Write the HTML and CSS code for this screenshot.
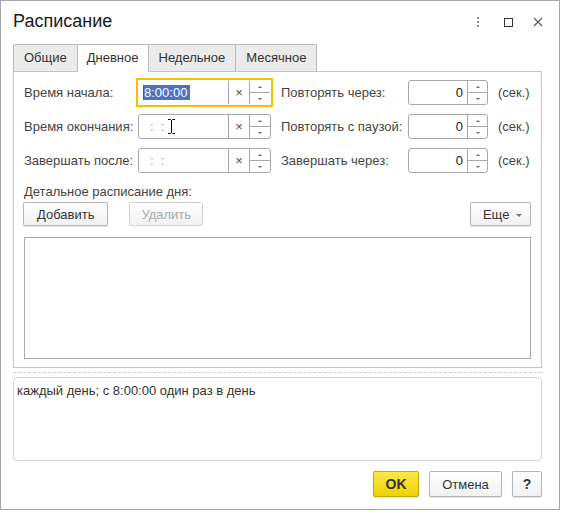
FILE: index.html
```html
<!DOCTYPE html>
<html lang="ru">
<head>
    <meta charset="UTF-8">
    <meta name="viewport" content="width=device-width, initial-scale=1.0">
    <title>Расписание</title>
    <link rel="stylesheet" href="styles.css">
</head>
<body>
    <div class="window">
        <header class="titlebar">
            <h1>Расписание</h1>
            <div class="win-buttons">
                <span class="win-btn">
                    <svg width="2" height="10" viewBox="0 0 2 10"><rect x="0" y="0" width="2" height="2" fill="#8a8a8a"/><rect x="0" y="4" width="2" height="2" fill="#8a8a8a"/><rect x="0" y="8" width="2" height="2" fill="#8a8a8a"/></svg>
                </span>
                <span class="win-btn">
                    <svg width="9" height="9" viewBox="0 0 9 9"><rect x="0.5" y="0.5" width="8" height="8" fill="none" stroke="#333"/></svg>
                </span>
                <span class="win-btn">
                    <svg width="10" height="10" viewBox="0 0 10 10"><path d="M1 1 L9 9 M9 1 L1 9" stroke="#555" stroke-width="1.1" fill="none"/></svg>
                </span>
            </div>
        </header>

        <nav class="tabs">
            <a class="tab">Общие</a>
            <a class="tab active">Дневное</a>
            <a class="tab">Недельное</a>
            <a class="tab">Месячное</a>
        </nav>

        <div class="panel">
            <div class="form-grid">
                <label>Время начала:</label>
                <div class="field focus">
                    <div class="field-text"><span class="sel">8:00:00</span></div>
                    <div class="field-clear">&times;</div>
                    <div class="spin"><span class="up"></span><span class="down"></span></div>
                </div>
                <label class="right">Повторять через:</label>
                <div class="num">
                    <div class="num-text">0</div>
                    <div class="spin"><span class="up"></span><span class="down"></span></div>
                </div>
                <span class="unit">(сек.)</span>

                <label>Время окончания:</label>
                <div class="field">
                    <div class="field-text"><span class="mask">:&nbsp;&nbsp;:</span></div>
                    <div class="field-clear">&times;</div>
                    <div class="spin"><span class="up"></span><span class="down"></span></div>
                    <svg class="ibeam" width="9" height="17" viewBox="0 0 9 17"><path d="M1 1.5 H3.5 L4.5 2.5 L5.5 1.5 H8 M4.5 2.5 V14.5 M1 15.5 H3.5 L4.5 14.5 L5.5 15.5 H8" stroke="#fff" stroke-width="2.6" fill="none"/><path d="M1 1.5 H3.5 L4.5 2.5 L5.5 1.5 H8 M4.5 2.5 V14.5 M1 15.5 H3.5 L4.5 14.5 L5.5 15.5 H8" stroke="#000" stroke-width="1" fill="none"/></svg>
                </div>
                <label class="right">Повторять с паузой:</label>
                <div class="num">
                    <div class="num-text">0</div>
                    <div class="spin"><span class="up"></span><span class="down"></span></div>
                </div>
                <span class="unit">(сек.)</span>

                <label>Завершать после:</label>
                <div class="field">
                    <div class="field-text"><span class="mask">:&nbsp;&nbsp;:</span></div>
                    <div class="field-clear">&times;</div>
                    <div class="spin"><span class="up"></span><span class="down"></span></div>
                </div>
                <label class="right">Завершать через:</label>
                <div class="num">
                    <div class="num-text">0</div>
                    <div class="spin"><span class="up"></span><span class="down"></span></div>
                </div>
                <span class="unit">(сек.)</span>
            </div>

            <div class="section-label">Детальное расписание дня:</div>
            <div class="toolbar">
                <button class="btn">Добавить</button>
                <button class="btn" disabled>Удалить</button>
                <button class="btn more">Еще <span class="caret"></span></button>
            </div>
            <div class="list"></div>
        </div>

        <div class="separator"></div>
        <div class="summary">каждый день; с 8:00:00 один раз в день</div>

        <div class="footer">
            <button class="btn ok">OK</button>
            <button class="btn cancel">Отмена</button>
            <button class="btn help">?</button>
        </div>
    </div>
</body>
</html>
```

FILE: styles.css
```css
body {
    margin: 0;
    padding: 0;
    background: #fff;
    font-family: "Liberation Sans", Arial, sans-serif;
    font-size: 13px;
    color: #333;
}
.window {
    width: 560px;
    height: 510px;
    box-sizing: border-box;
    border: 1px solid #a6a6a6;
    padding: 0 17px 0 12px;
    background: #fff;
}
.titlebar {
    display: flex;
    align-items: flex-start;
    height: 43px;
    margin-right: -11px;
}
.titlebar h1 {
    margin: 0;
    padding-top: 10px;
    font-size: 18px;
    font-weight: normal;
    line-height: 20px;
    color: #1a1a1a;
}
.win-buttons {
    display: flex;
    margin-left: auto;
    padding-top: 11px;
}
.win-btn {
    display: flex;
    align-items: center;
    justify-content: center;
    width: 30px;
    height: 20px;
}

/* tabs */
.tabs {
    display: flex;
    margin-bottom: -1px;
}
.tab {
    height: 28px;
    box-sizing: border-box;
    padding: 0 10px;
    line-height: 26px;
    background: #ebebeb;
    border: 1px solid #b8b8b8;
    border-bottom-color: #c3c3c3;
    border-radius: 2px 2px 0 0;
    margin-right: -1px;
    color: #333;
    cursor: pointer;
}
.tab.active {
    position: relative;
    z-index: 1;
    padding: 0 9px;
    background: #fff;
    border-bottom-color: #fff;
}

.panel {
    border: 1px solid #c3c3c3;
    padding: 8px 10px 8px 10px;
}
.form-grid {
    display: grid;
    grid-template-columns: 114px 133px 137px 80px 1fr;
    grid-auto-rows: 25px;
    row-gap: 9px;
    align-items: center;
}
.form-grid label,
.unit {
    color: #444;
}
.form-grid .right {
    padding-left: 10px;
}
.unit {
    padding-left: 10px;
}

/* date fields */
.field {
    position: relative;
    display: flex;
    height: 25px;
    box-sizing: border-box;
    border: 1px solid #a8a8a8;
    border-radius: 3px;
    background: #fff;
}
.field.focus {
    border-color: #fff;
    border-radius: 0;
    box-shadow: 0 0 0 2px #f4c300;
}
.field-text {
    flex: 1;
    display: flex;
    align-items: center;
    padding-left: 4px;
}
.sel {
    background: #4f72c9;
    color: #fff;
    line-height: 15px;
    padding-right: 3px;
    border-left: 1px solid #6b5a1a;
}
.mask {
    color: #86a0cc;
    padding-left: 7px;
}
.field-clear {
    width: 21px;
    box-sizing: border-box;
    border-left: 1px solid #a8a8a8;
    text-align: center;
    line-height: 23px;
    font-size: 13px;
    color: #555;
}
.spin {
    width: 21px;
    box-sizing: border-box;
    border-left: 1px solid #a8a8a8;
    display: flex;
    flex-direction: column;
}
.spin span {
    flex: 1;
    display: flex;
    align-items: center;
    justify-content: center;
}
.spin .up {
    border-bottom: 1px solid #a8a8a8;
}
.spin .up::after {
    content: "";
    border-left: 2px solid transparent;
    border-right: 2px solid transparent;
    border-bottom: 2px solid #666;
}
.spin .down::after {
    content: "";
    border-left: 2px solid transparent;
    border-right: 2px solid transparent;
    border-top: 2px solid #666;
}
.ibeam {
    position: absolute;
    left: 28px;
    top: 3px;
}

/* number fields */
.num {
    display: flex;
    height: 25px;
    box-sizing: border-box;
    border: 1px solid #a8a8a8;
    border-radius: 3px;
}
.num-text {
    flex: 1;
    text-align: right;
    padding-right: 4px;
    line-height: 23px;
    color: #222;
}
.num .spin {
    width: 20px;
}

.section-label {
    margin-top: 11px;
    line-height: 16px;
    color: #444;
}
.toolbar {
    display: flex;
    gap: 21px;
    margin-top: 2px;
    margin-left: -1px;
}
.btn {
    height: 24px;
    padding: 0 13px;
    font-family: inherit;
    font-size: 13px;
    color: #333;
    background: linear-gradient(#fff, #f1f1f1);
    border: 1px solid #b5b5b5;
    border-radius: 2px;
    box-shadow: 0 1px 1px rgba(0, 0, 0, 0.12);
    cursor: pointer;
}
.btn:disabled {
    padding: 0 11px;
    color: #a9a9a9;
    border-color: #d3d3d3;
    box-shadow: none;
    cursor: default;
}
.toolbar .more {
    margin-left: auto;
    padding: 0 8px 0 12px;
}
.caret {
    display: inline-block;
    vertical-align: middle;
    margin-left: 3px;
    border-left: 3px solid transparent;
    border-right: 3px solid transparent;
    border-top: 3px solid #777;
}
.list {
    height: 122px;
    box-sizing: border-box;
    margin-top: 11px;
    border: 1px solid #aaa;
}

.separator {
    margin-top: 4px;
    border-top: 1px dashed #d2d2d2;
}
.summary {
    height: 84px;
    box-sizing: border-box;
    margin-top: 4px;
    padding: 5px 3px;
    border: 1px solid #d6d6d6;
    border-radius: 4px;
    color: #333;
}

.footer {
    display: flex;
    justify-content: flex-end;
    gap: 10px;
    margin-top: 10px;
}
.footer .btn {
    height: 26px;
}
.ok {
    width: 46px;
    padding: 0;
    font-size: 14px;
    font-weight: bold;
    background: linear-gradient(#fce84a, #f0d000);
    border-color: #c9aa00;
}
.cancel {
    width: 73px;
    padding: 0;
}
.help {
    width: 30px;
    padding: 0;
    font-size: 14px;
    font-weight: bold;
}
```
